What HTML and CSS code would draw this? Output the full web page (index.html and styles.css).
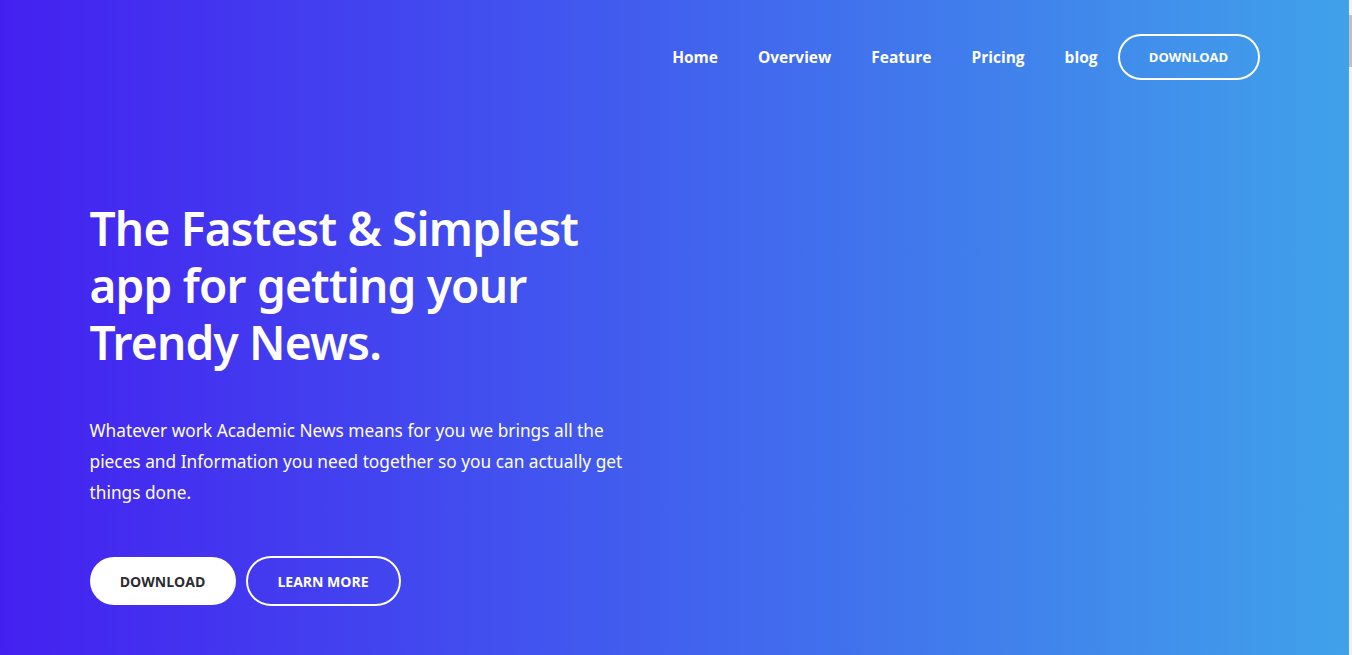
FILE: index.html
```html
<!DOCTYPE html>
<html lang="en">
<head>
<meta charset="utf-8">
<title>Trendy News</title>
<link rel="stylesheet" href="styles.css">
</head>
<body>
<div class="page">
  <header class="header">
    <div class="container header-inner">
      <nav class="nav">
        <a class="nav-link" href="#">Home</a>
        <a class="nav-link" href="#">Overview</a>
        <a class="nav-link" href="#">Feature</a>
        <a class="nav-link" href="#">Pricing</a>
        <a class="nav-link" href="#">blog</a>
        <a class="nav-btn" href="#">DOWNLOAD</a>
      </nav>
    </div>
  </header>
  <section class="hero">
    <div class="container">
      <h1 class="hero-title">The Fastest &amp; Simplest app for getting your Trendy News.</h1>
      <p class="hero-text">Whatever work Academic News means for you we brings all the pieces and Information you need together so you can actually get things done.</p>
      <div class="hero-actions">
        <a class="btn btn-solid" href="#">DOWNLOAD</a>
        <a class="btn btn-outline" href="#">LEARN MORE</a>
      </div>
    </div>
  </section>
</div>
<div class="scrollbar"><div class="scrollbar-thumb"></div></div>
</body>
</html>
```
FILE: styles.css
```css
* { box-sizing: border-box; }
html, body { margin: 0; padding: 0; height: 100%; overflow: hidden; }
body {
  font-family: "Open Sans", "Noto Sans", sans-serif;
  color: #fff;
  background: #f1f1f1;
}
a { text-decoration: none; color: inherit; }
.page {
  width: 1349px;
  height: 655px;
  background: linear-gradient(90deg, #4420f0 0%, #4161ee 50%, #40a2ea 100%);
}
.container {
  width: 1170px;
  margin: 0 auto;
}
.header-inner {
  display: flex;
  justify-content: flex-end;
  padding-top: 34px;
}
.nav {
  display: flex;
  align-items: center;
}
.nav-link {
  font-size: 15.5px;
  font-weight: 700;
  padding: 0 20px;
  line-height: 46px;
}
.nav-btn {
  width: 142px;
  height: 46px;
  border: 2px solid #fff;
  border-radius: 23px;
  display: flex;
  align-items: center;
  justify-content: center;
  font-size: 13px;
  font-weight: 700;
}
.hero { padding-top: 120px; }
.hero-title {
  margin: 0;
  width: 540px;
  font-family: "Noto Sans", "Open Sans", sans-serif;
  font-size: 46px;
  font-weight: 600;
  line-height: 57px;
  letter-spacing: -0.8px;
}
.hero-text {
  margin: 44px 0 0;
  width: 545px;
  font-family: "Noto Sans", "Open Sans", sans-serif;
  font-size: 17.3px;
  line-height: 31px;
}
.hero-actions {
  display: flex;
  align-items: center;
  gap: 10px;
  margin-top: 48px;
}
.btn {
  display: flex;
  align-items: center;
  justify-content: center;
  font-size: 14px;
  font-weight: 700;
  border-radius: 25px;
}
.btn-solid {
  width: 146px;
  height: 48px;
  background: #fff;
  color: #2b2b33;
  border-radius: 24px;
}
.btn-outline {
  width: 155px;
  height: 50px;
  border: 2px solid #fff;
}
.scrollbar {
  position: fixed;
  top: 0;
  right: 0;
  width: 3px;
  height: 655px;
  background: #f1f1f1;
}
.scrollbar-thumb {
  margin-top: 15px;
  height: 52px;
  background: #c1c1c1;
}
```
